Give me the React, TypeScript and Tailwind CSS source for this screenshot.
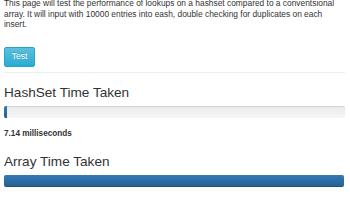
import React from "react";

function Progress({ pct }: { pct: number }) {
  return (
    <div className="h-[12px] w-full overflow-hidden rounded-[2px] bg-gradient-to-b from-[#ebebeb] to-[#f5f5f5] shadow-[inset_0_1px_1px_rgba(0,0,0,0.1)]">
      <div
        className="h-full bg-gradient-to-b from-[#337ab7] to-[#286090] shadow-[inset_0_-1px_0_rgba(0,0,0,0.15)]"
        style={{ width: `${pct}%` }}
      />
    </div>
  );
}

export default function App() {
  return (
    <div
      className="h-[200px] w-[350px] overflow-hidden bg-white px-[4px] text-[#333]"
      style={{ fontFamily: '"Liberation Sans", Arial, Helvetica, sans-serif' }}
    >
      <p className="mt-[-2px] pr-[10px] text-[8.4px] leading-[10.6px]">
        This page will test the performance of lookups on a hashset compared to a conventsional array. It will input with 10000 entries into eash, double checking for duplicates on each insert.
      </p>
      <div className="mt-[17px]">
        <button className="flex h-[20px] w-[31px] items-center justify-center rounded-[2px] border border-[#28a4c9] bg-gradient-to-b from-[#5bc0de] to-[#2aabd2] text-[8.5px] font-medium text-white [text-shadow:0_-1px_0_rgba(0,0,0,0.2)]">
          Test
        </button>
      </div>
      <hr className="mt-[5px] mr-[1px] border-t border-[#eee]" />
      <h3 className="mt-[11px] text-[13.6px] font-medium leading-[17px]">HashSet Time Taken</h3>
      <div className="mt-[5px] mr-[1px]">
        <Progress pct={0.9} />
      </div>
      <h5 className="mt-[11px] text-[8.2px] font-bold leading-[10px]">7.14 milliseconds</h5>
      <h3 className="mt-[14px] text-[13.6px] font-medium leading-[17px]">Array Time Taken</h3>
      <div className="mt-[5px] mr-[2px]">
        <Progress pct={100} />
      </div>
    </div>
  );
}
